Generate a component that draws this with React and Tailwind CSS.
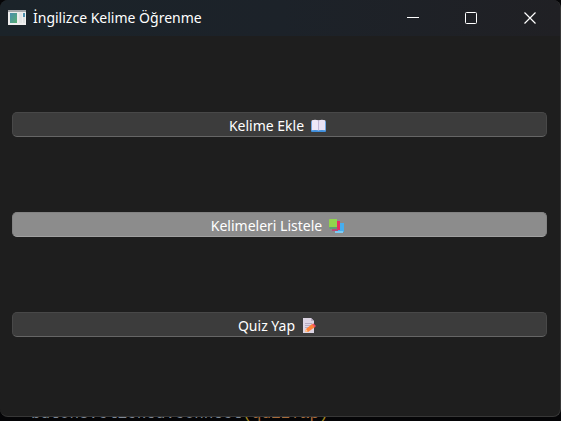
import React from "react";

function AppIcon() {
  return (
    <svg width="18" height="16" viewBox="0 0 18 16" aria-hidden="true">
      <defs>
        <linearGradient id="pane" x1="0" y1="0" x2="1" y2="1">
          <stop offset="0" stopColor="#4a8fae" />
          <stop offset="1" stopColor="#58ad72" />
        </linearGradient>
      </defs>
      <rect width="18" height="15" fill="#eeeeee" />
      <rect width="18" height="2" fill="#a4a7aa" />
      <rect x="2" y="3" width="7" height="10" fill="url(#pane)" />
      <rect x="11" y="3" width="3" height="10" fill="#e3e5e5" />
      <rect x="15" y="3" width="2" height="4" fill="#4b8eab" />
      <rect x="15" y="7" width="2" height="6" fill="#dfe2e2" />
    </svg>
  );
}

function BookIcon() {
  return (
    <svg width="16" height="14" viewBox="0 0 16 14" aria-hidden="true">
      <rect x="0" y="2" width="15" height="11" rx="1" fill="#3f8fdc" />
      <path d="M0.7 1.3Q4 0.4 7.5 1.3V11.3Q4 10.6 0.7 11.3Z" fill="#eee8f8" />
      <path d="M7.5 1.3Q11 0.4 14.3 1.3V11.3Q11 10.6 7.5 11.3Z" fill="#e8e1f4" />
      <path d="M7.5 1.5V11.5" stroke="#c3b9d8" />
    </svg>
  );
}

function BooksIcon() {
  return (
    <svg width="16" height="14" viewBox="0 0 16 14" aria-hidden="true">
      <path d="M7 4H15V13H7Z" fill="#46aef0" />
      <path d="M6 12H14V14H6Z" fill="#7ccbf4" />
      <path d="M3 2H11V11H3Z" fill="#e72c62" />
      <path d="M3 10H9V12H3Z" fill="#b84c78" />
      <path d="M0 1Q0 0 1 0H8V9H0Z" fill="#91d34d" />
      <path d="M0 8H8V10H1Z" fill="#5e9c77" />
    </svg>
  );
}

function MemoIcon() {
  return (
    <svg width="16" height="15" viewBox="0 0 16 15" aria-hidden="true">
      <path d="M1 0H9L12 3V15H1Z" fill="#ddd5e4" />
      <path d="M9 0V3H12Z" fill="#b9adc5" />
      <path d="M3 5.5H10M3 7.5H9M3 9.5H7" stroke="#b6abc1" />
      <path d="M3 14L4 11L10 6L13 9L6 14Z" fill="#ff8139" />
      <path d="M10 6L11.5 5.5L14 8L12.5 9.5Z" fill="#ef4b61" />
      <path d="M3 14L4 11L6 13.5Z" fill="#ffd2a5" />
    </svg>
  );
}

function MenuButton({ label, icon, active }) {
  return (
    <button
      type="button"
      className={
        "flex h-[25px] w-full items-center justify-center gap-[7px] rounded-[5px] border pt-[3px] pr-[3px] text-[14px] leading-5 text-white " +
        (active
          ? "border-[#828282] border-b-[#a0a0a0] bg-[#8c8c8c]"
          : "border-[#484848] border-b-[#666666] bg-[#3c3c3c]")
      }
    >
      <span>{label}</span>
      {icon}
    </button>
  );
}

export default function App() {
  return (
    <div className="relative h-screen overflow-hidden bg-[#050507] font-['Noto_Sans','Open_Sans',sans-serif]">
      <code className="absolute bottom-[-3px] left-[31px] font-['Liberation_Mono',monospace] text-[16px] leading-5 text-[#7d8794]">
        buton3.clicked.connect<span className="text-[#a88a20]">(</span>
        <span className="text-[#a86c3c]">quizYap</span>
        <span className="text-[#a88a20]">)</span>
      </code>
      <main className="relative flex h-[calc(100%-4px)] flex-col overflow-hidden rounded-lg border-r border-b border-[#373737] bg-[#1e1e1e]">
        <header className="flex h-9 shrink-0 items-center bg-linear-to-r from-[#1b2329] via-[#1c2229] to-[#202024] pl-2">
          <AppIcon />
          <h1 className="ml-[7px] flex-1 text-[14px] leading-5 text-white">İngilizce Kelime Öğrenme</h1>
          <div className="flex h-full pb-px text-white">
            <button type="button" aria-label="Minimize" className="flex w-[58px] items-center justify-center">
              <svg width="12" height="12" viewBox="0 0 12 12"><path d="M0 5.5H12" stroke="currentColor" /></svg>
            </button>
            <button type="button" aria-label="Maximize" className="flex w-[58px] items-center justify-center">
              <svg width="12" height="12" viewBox="0 0 12 12"><rect x=".5" y=".5" width="11" height="11" rx="1" fill="none" stroke="currentColor" /></svg>
            </button>
            <button type="button" aria-label="Close" className="flex w-[60px] items-center justify-center">
              <svg width="12" height="12" viewBox="0 0 12 12"><path d="M.5 .5L11.5 11.5M11.5 .5L.5 11.5" stroke="currentColor" strokeWidth="1.2" /></svg>
            </button>
          </div>
        </header>
        <nav className="flex flex-1 flex-col justify-center gap-[75px] pr-[13px] pb-1 pl-3">
          <MenuButton label="Kelime Ekle" icon={<BookIcon />} />
          <MenuButton label="Kelimeleri Listele" icon={<BooksIcon />} active />
          <MenuButton label="Quiz Yap" icon={<MemoIcon />} />
        </nav>
      </main>
    </div>
  );
}
